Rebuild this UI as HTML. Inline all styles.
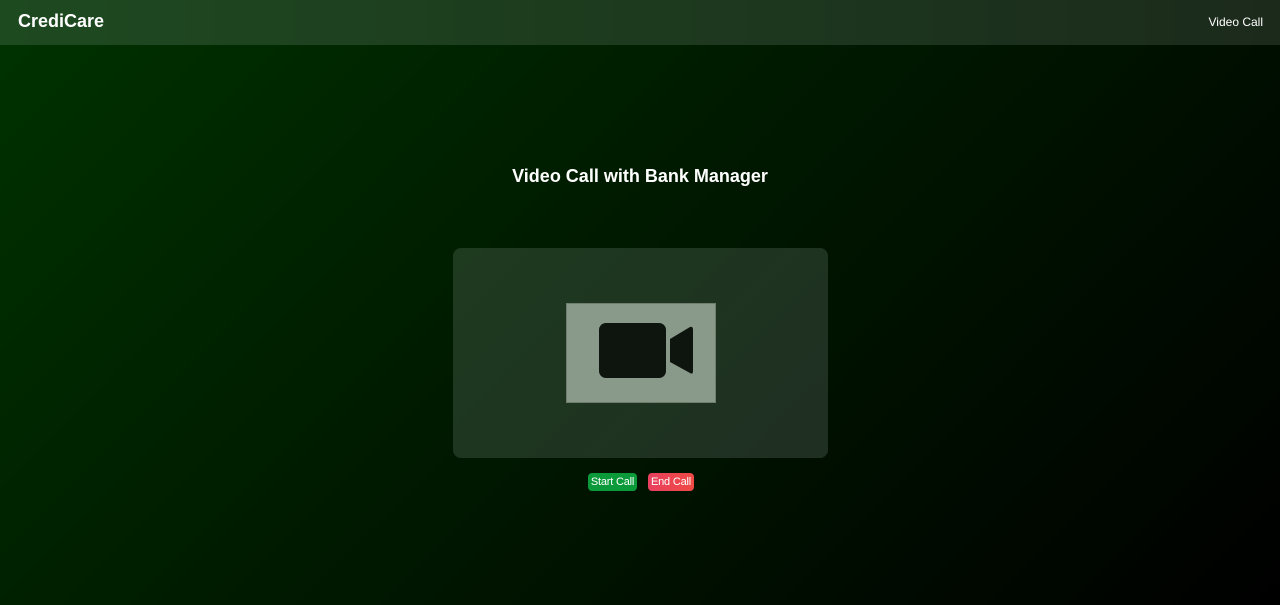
<!DOCTYPE html>
<html><head><style>
*{margin:0;padding:0;box-sizing:border-box}
body{width:1280px;height:605px;overflow:hidden;font-family:"Liberation Sans",sans-serif;background:linear-gradient(135deg,#003300 0%,#001a00 45%,#000 100%);position:relative;color:#fff}
.nav{position:absolute;left:0;top:0;width:1280px;height:45px;background:linear-gradient(90deg,#1e4a20,#1c2a1c)}
.logo{position:absolute;left:18px;top:11px;font-size:18px;font-weight:bold}
.link{position:absolute;right:17px;top:15px;font-size:12px}
h1{position:absolute;left:0;width:1280px;top:166px;text-align:center;font-size:18px;font-weight:bold}
.box{position:absolute;left:453px;top:248px;width:375px;height:210px;background:linear-gradient(135deg,#1e3a1f,#1f2f22);border-radius:8px}
.img{position:absolute;left:566px;top:303px;width:150px;height:100px;background:#8a9a8a;border:1px solid #6f7e6f}
.btn{position:absolute;top:473px;height:18px;font-size:11px;line-height:18px;text-align:center;border-radius:4px;color:#fff;white-space:nowrap;letter-spacing:-0.2px}
</style></head><body>
<div class="nav"><div class="logo">CrediCare</div><div class="link">Video Call</div></div>
<h1>Video Call with Bank Manager</h1>
<div class="box"></div>
<div class="img"></div>
<svg style="position:absolute;left:0;top:0" width="1280" height="605">
<rect x="599" y="323" width="67" height="55" rx="7" fill="#0e150e"/>
<path d="M670 339 L690 327 Q693 326 693 330 L693 371 Q693 375 690 373 L670 362 Z" fill="#0e150e"/>
</svg>
<div class="btn" style="left:588px;width:49px;background:#0a9a3a">Start Call</div>
<div class="btn" style="left:648px;width:46px;background:linear-gradient(90deg,#e8405f,#f04a44)">End Call</div>
</body></html>
